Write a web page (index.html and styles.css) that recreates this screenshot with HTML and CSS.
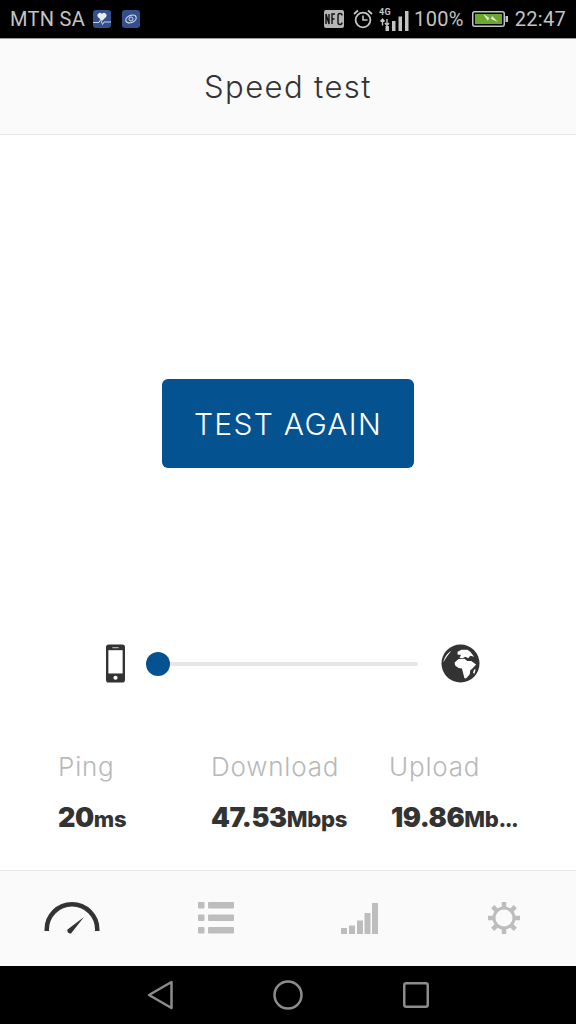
FILE: index.html
```html
<!DOCTYPE html>
<html lang="en">
<head>
<meta charset="utf-8">
<title>Speed test</title>
<link rel="stylesheet" href="styles.css">
</head>
<body>
<div class="app">
  <div class="statusbar">
    <div class="sb-left">
      <span class="carrier">MTN SA</span>
      <svg class="nicon" viewBox="0 0 18 18"><rect width="18" height="18" rx="3" fill="#34508c"/><path d="M9 11 5 7a2.500 2.500 0 0 1 4-3 2.500 2.500 0 0 1 4 3z" fill="#e8ecf4"/><path d="M0 12.500h6l1.500-3 2 5 1.500-2.500h7" fill="none" stroke="#c9d2e6" stroke-width="1"/></svg>
      <svg class="nicon" viewBox="0 0 18 18"><rect width="18" height="18" rx="3" fill="#34508c"/><ellipse cx="9" cy="9" rx="5.500" ry="3.500" transform="rotate(-25 9 9)" fill="none" stroke="#d3dbec" stroke-width="1.200"/><circle cx="9" cy="9" r="2" fill="none" stroke="#d3dbec"/></svg>
    </div>
    <div class="sb-right">
      <svg class="nfc" viewBox="0 0 20 18"><rect width="20" height="18" rx="2" fill="#b5b5b5"/><path d="M2 14V4l3 10V4M8 14V4h3M8 9h2.500M18 5.500a2 2 0 0 0-4 0v7a2 2 0 0 0 4 0" fill="none" stroke="#111" stroke-width="1.400"/></svg>
      <svg class="alarm" viewBox="0 0 20 20" fill="none" stroke="#c4c4c4"><circle cx="10" cy="11" r="7.400" stroke-width="1.800"/><path d="M10 6.500V11h4.500" stroke-width="1.600"/><path d="M1 5l4-3.500M19 5l-4-3.500" stroke-width="1.800"/></svg>
      <svg class="signal" viewBox="0 0 30 23"><text x="0" y="7" class="fourg">4G</text><path d="M3.500 17.500v-6M1.500 13.500l2-2.500 2 2.500M8 11v6M6 15l2 2.500 2-2.500" stroke="#c4c4c4" stroke-width="1.400" fill="none"/><rect x="6.500" y="18" width="3.500" height="5" fill="#c4c4c4"/><rect x="13" y="13" width="3.500" height="10" fill="#c4c4c4"/><rect x="19.500" y="8.500" width="3.500" height="14.500" fill="#c4c4c4"/><rect x="26" y="3" width="3.500" height="20" fill="#c4c4c4"/></svg>
      <span class="pct">100%</span>
      <svg class="battery" viewBox="0 0 36 16"><rect x="0.750" y="0.750" width="31.500" height="14.500" rx="2" fill="none" stroke="#c4c4c4" stroke-width="1.500"/><rect x="3" y="3" width="27" height="10" fill="#6aa82c"/><path d="M33.500 5h2.500v6h-2.500z" fill="#c4c4c4"/><path d="M11 3l8 5 1-3 6 6-9-4-1 3z" fill="#e8e8e8"/></svg>
      <span class="clock">22:47</span>
    </div>
  </div>
  <header class="header"><h1 class="title">Speed test</h1></header>
  <main class="main">
    <section class="hero"><button class="again">TEST AGAIN</button></section>
    <section class="progress">
      <svg class="phone" viewBox="0 0 20 40"><rect width="20" height="40" rx="3" fill="#333"/><rect x="2.500" y="6" width="15" height="24.500" fill="#fff"/><rect x="6.500" y="2.500" width="7" height="1.500" rx=".7" fill="#aaa"/><circle cx="10" cy="35" r="2.200" fill="#fff"/></svg>
      <div class="track"><span class="knob"></span></div>
      <svg class="globe" viewBox="0 0 40 40"><circle cx="20" cy="20" r="19.500" fill="#333"/><path d="M17 8l4-2 6 0 3 2 4 5-4-1-2 2.500-3-1.500-3 1.500-3-.5 1.500-3-3.500 0z" fill="#fff"/><path d="M14 19l4-3.500 6-.5 3 2.500 4 0 5 3.500-4 4.500-2 1.500-.5 4-3.500 4h-2l-1.500-6-1-4-3.500-.5-3.500-2.500z" fill="#fff"/><path d="M34 26l1.500.5-1.500 4.500-1-2z" fill="#fff"/><path d="M2.500 19c.5-5 4-9.500 8-12-2.500 3.500-6 7.500-8 12z" fill="#fff"/></svg>
    </section>
    <section class="stats">
      <div class="stat s1"><div class="label">Ping</div><div class="value">20<small>ms</small></div></div>
      <div class="stat s2"><div class="label">Download</div><div class="value">47.53<small>Mbps</small></div></div>
      <div class="stat s3"><div class="label">Upload</div><div class="value">19.86<small>Mb<span class="dots">...</span></small></div></div>
    </section>
  </main>
  <nav class="tabs">
    <svg class="tab gauge" viewBox="0 0 56 32"><path d="M2.750 29v-1.500a25.250 25.250 0 0 1 50.500 0V29" fill="none" stroke="#333" stroke-width="4.500"/><path d="M40 15 23.500 27.500a3 3 0 0 0 3.500 4z" fill="#333"/></svg>
    <svg class="tab list" viewBox="0 0 36 32" fill="#bdbdbd"><rect width="6.500" height="6.500" rx="1"/><rect x="10" width="26" height="6.500" rx="1"/><rect y="12.500" width="6.500" height="6.500" rx="1"/><rect x="10" y="12.500" width="26" height="6.500" rx="1"/><rect y="25" width="6.500" height="6.500" rx="1"/><rect x="10" y="25" width="26" height="6.500" rx="1"/></svg>
    <svg class="tab bars" viewBox="0 0 38 32" fill="#bdbdbd"><rect y="26" width="6" height="6"/><rect x="8" y="23.500" width="6" height="8.500"/><rect x="16" y="18.500" width="6" height="13.500"/><rect x="23.500" y="11" width="6" height="21"/><rect x="31" y="1" width="6" height="31"/></svg>
    <svg class="tab gear" viewBox="0 0 32 32"><g stroke="#bdbdbd" stroke-width="4.500"><path d="M16 0v32M0 16h32M4.700 4.700l22.600 22.600M27.300 4.700 4.700 27.300"/></g><circle cx="16" cy="16" r="11.500" fill="#bdbdbd"/><circle cx="16" cy="16" r="8.500" fill="#fafafa"/></svg>
  </nav>
  <div class="navbar">
    <svg class="back" viewBox="0 0 26 30"><path d="M24.500 2v26L2 15z" fill="none" stroke="#8c8c8c" stroke-width="2.500" stroke-linejoin="round"/></svg>
    <svg class="home" viewBox="0 0 30 30"><circle cx="15" cy="15" r="13.500" fill="none" stroke="#8c8c8c" stroke-width="2.500"/></svg>
    <svg class="recent" viewBox="0 0 26 26"><rect x="1.250" y="1.250" width="23.500" height="23.500" rx="2" fill="none" stroke="#8c8c8c" stroke-width="2.500"/></svg>
  </div>
</div>
</body>
</html>
```
FILE: styles.css
```css
* { box-sizing: border-box; }
html, body { margin: 0; padding: 0; background: #fff; }
.app { width: 576px; height: 1024px; display: flex; flex-direction: column; font-family: Inter, "Liberation Sans", sans-serif; overflow: hidden; }

.statusbar { height: 39px; flex: none; background: #000; border-bottom: 1px solid #999; display: flex; justify-content: space-between; align-items: center; padding: 0 10px; color: #c4c4c4; font-family: Roboto, sans-serif; font-size: 20px; letter-spacing: .3px; }
.sb-left, .sb-right { display: flex; align-items: center; }
.carrier { margin-right: 8px; }
.nicon { width: 18px; height: 18px; margin-right: 11px; }
.nfc { width: 20px; height: 18px; margin-right: 9px; }
.alarm { width: 20px; height: 20px; margin-right: 6px; }
.signal { width: 30px; height: 23px; margin-right: 5px; }
.fourg { font: bold 9px Roboto, sans-serif; fill: #c4c4c4; }
.pct { margin-right: 8px; }
.battery { width: 36px; height: 16px; margin-right: 7px; }

.header { height: 96px; flex: none; background: #fafafa; border-bottom: 1px solid #e6e6e6; display: flex; align-items: center; justify-content: center; }
.title { margin: 0; font-size: 31px; font-weight: 300; color: #333; letter-spacing: 1.400px; }

.main { flex: 1; display: flex; flex-direction: column; background: #fff; }
.hero { height: 509px; display: flex; flex: none; justify-content: center; padding-top: 244px; align-items: flex-start; }
.again { width: 252px; height: 89px; border: 0; border-radius: 6px; background: #04528f; color: #fff; font: 300 30px Inter, sans-serif; letter-spacing: 1.300px; padding: 0; }

.progress { height: 39px; flex: none; display: flex; align-items: center; padding-left: 106px; }
.phone { width: 19px; height: 39px; }
.track { position: relative; width: 272px; height: 4px; margin: 0 23px 0 21px; background: #e6e6e6; border-radius: 2px; }
.knob { position: absolute; left: 0; top: -10px; width: 24px; height: 24px; border-radius: 50%; background: #04528f; }
.globe { width: 39px; height: 39px; }

.stats { display: flex; padding: 69px 0 0 58px; }
.stat { flex: none; }
.s1 { width: 153px; }
.s2 { width: 178px; }
.s3 { width: 150px; }
.label { font-size: 26px; font-weight: 300; color: #b8b8b8; line-height: 30px; letter-spacing: .8px; }
.value { font-size: 27px; font-weight: 900; color: #333; line-height: 32px; margin-top: 20px; letter-spacing: -.4px; }
.value small { font-size: 22px; font-weight: 800; letter-spacing: -.3px; }
.dots { letter-spacing: -1.500px; }
.s3 .value { margin-left: 2px; }

.tabs { height: 96px; flex: none; background: #fafafa; border-top: 1px solid #e6e6e6; padding-bottom: 2px; display: grid; grid-template-columns: repeat(4, 144px); justify-items: center; align-items: center; }
.gauge { width: 56px; height: 32px; }
.list { width: 36px; height: 32px; }
.bars { width: 38px; height: 32px; }
.gear { width: 32px; height: 32px; }

.navbar { height: 58px; flex: none; background: #000; display: flex; align-items: center; gap: 100px; padding-left: 147px; }
.back { width: 26px; height: 30px; }
.home { width: 30px; height: 30px; }
.recent { width: 26px; height: 26px; }
```
